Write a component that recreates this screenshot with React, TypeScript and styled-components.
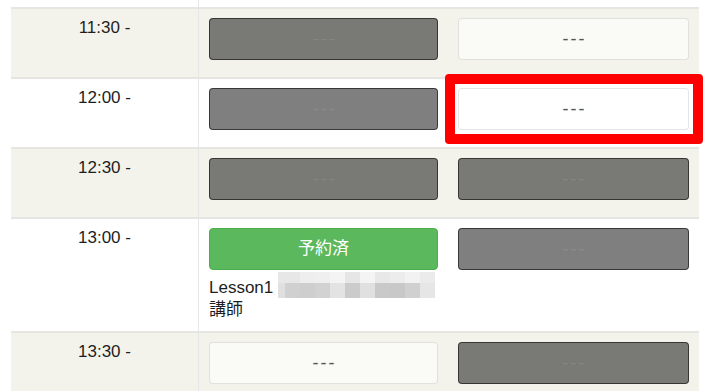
import React from "react";
import styled, { createGlobalStyle, css } from "styled-components";

const Global = createGlobalStyle`
  html, body { margin: 0; padding: 0; background: #fff; }
  body {
    font-family: "Liberation Sans", "Noto Sans CJK JP", sans-serif;
    font-size: 17px;
    line-height: 20px;
    color: #222;
    overflow: hidden;
  }
`;

const Page = styled.div`
  padding: 0 8px 0 11px;
`;

const Table = styled.div`
  width: 688px;
`;

const Row = styled.div<{ $striped?: boolean; $stub?: boolean }>`
  display: grid;
  grid-template-columns: 187px 250px 251px;
  border-top: ${(p) => (p.$stub ? "none" : "2px solid #e5e5e1")};
  background: ${(p) => (p.$striped ? "#f3f3eb" : "#ffffff")};
`;

const Cell = styled.div<{ $divider?: boolean }>`
  padding: 9px 10px 10px;
  ${(p) =>
    p.$divider &&
    css`
      border-left: 1px solid #e6e6e6;
    `}
`;

const StubCell = styled.div<{ $divider?: boolean }>`
  height: 7px;
  ${(p) =>
    p.$divider &&
    css`
      border-left: 1px solid #e6e6e6;
    `}
`;

const TimeCell = styled(Cell)`
  text-align: center;
  color: #1e1e1e;
`;

const Slot = styled.div`
  position: relative;
  margin-bottom: 7px;
`;

type Kind = "closed" | "open" | "booked";

const SlotButton = styled.div<{ $kind: Kind }>`
  box-sizing: border-box;
  height: 42px;
  border-radius: 4px;
  display: flex;
  align-items: center;
  justify-content: center;
  border: 1px solid transparent;
  ${(p) =>
    p.$kind === "closed" &&
    css`
      background: rgba(0, 0, 0, 0.5);
      border-color: rgba(0, 0, 0, 0.56);
      color: rgba(255, 255, 255, 0.1);
      font-size: 18px;
      letter-spacing: 2px;
      padding-left: 2px;
    `}
  ${(p) =>
    p.$kind === "open" &&
    css`
      background: rgba(255, 255, 255, 0.6);
      border-color: rgba(0, 0, 0, 0.1);
      color: #555;
      font-size: 18px;
      letter-spacing: 2px;
      padding-left: 2px;
    `}
  ${(p) =>
    p.$kind === "booked" &&
    css`
      background: #5cb85c;
      border-color: #4cae4c;
      color: #fff;
      font-size: 17px;
    `}
`;

const Highlight = styled.span`
  position: absolute;
  left: -13px;
  right: -14px;
  top: -14px;
  bottom: -14px;
  border: 10px solid #ff0000;
  border-radius: 4px;
  pointer-events: none;
`;

const Details = styled.div`
  margin-top: 1px;
  line-height: 22px;
  color: #1e1e1e;
`;

const Mosaic = styled.svg`
  display: inline-block;
  vertical-align: baseline;
  margin: -5px 0 -5px 5px;
`;

const topRow = ["#e7e7e7", "#e7e7e7", "#eeeeee", "#efefef", "#f4f4f4", "#e6e6e6", "#f4f4f4", "#e8e8e8", "#ececec", "#f2f2f2", "#ebebeb"];
const bottomRow = ["#e0e0e0", "#d0d0d0", "#cecece", "#d2d2d2", "#e3e3e3", "#cbcbcb", "#e0e0e0", "#c9c9c9", "#c8c8c8", "#d0d0d0", "#e6e6e6"];
const colX = [0, 7, 22, 37, 52, 67, 82, 97, 112, 127, 142];

function Censor() {
  return (
    <Mosaic width="157" height="26" viewBox="0 0 157 26" aria-hidden>
      {colX.map((x, i) => {
        const w = i === 0 ? 7 : 15;
        return (
          <g key={i}>
            <rect x={x} y={0} width={w} height={11} fill={topRow[i]} />
            <rect x={x} y={11} width={w} height={15} fill={bottomRow[i]} />
          </g>
        );
      })}
    </Mosaic>
  );
}

type SlotData = { kind: Kind; highlight?: boolean; details?: boolean };
type RowData = { time: string; striped: boolean; slots: [SlotData, SlotData] };

const rows: RowData[] = [
  { time: "11:30 -", striped: true, slots: [{ kind: "closed" }, { kind: "open" }] },
  { time: "12:00 -", striped: false, slots: [{ kind: "closed" }, { kind: "open", highlight: true }] },
  { time: "12:30 -", striped: true, slots: [{ kind: "closed" }, { kind: "closed" }] },
  { time: "13:00 -", striped: false, slots: [{ kind: "booked", details: true }, { kind: "closed" }] },
  { time: "13:30 -", striped: true, slots: [{ kind: "open" }, { kind: "closed" }] },
];

export default function App() {
  return (
    <Page>
      <Global />
      <Table>
        <Row $stub>
          <StubCell />
          <StubCell $divider />
          <StubCell />
        </Row>
        {rows.map((r) => (
          <Row key={r.time} $striped={r.striped}>
            <TimeCell>{r.time}</TimeCell>
            {r.slots.map((s, i) => (
              <Cell key={i} $divider={i === 0}>
                <Slot>
                  <SlotButton $kind={s.kind}>{s.kind === "booked" ? "予約済" : "---"}</SlotButton>
                  {s.highlight && <Highlight />}
                </Slot>
                {s.details && (
                  <Details>
                    Lesson1
                    <Censor />
                    <br />
                    講師
                  </Details>
                )}
              </Cell>
            ))}
          </Row>
        ))}
      </Table>
    </Page>
  );
}
